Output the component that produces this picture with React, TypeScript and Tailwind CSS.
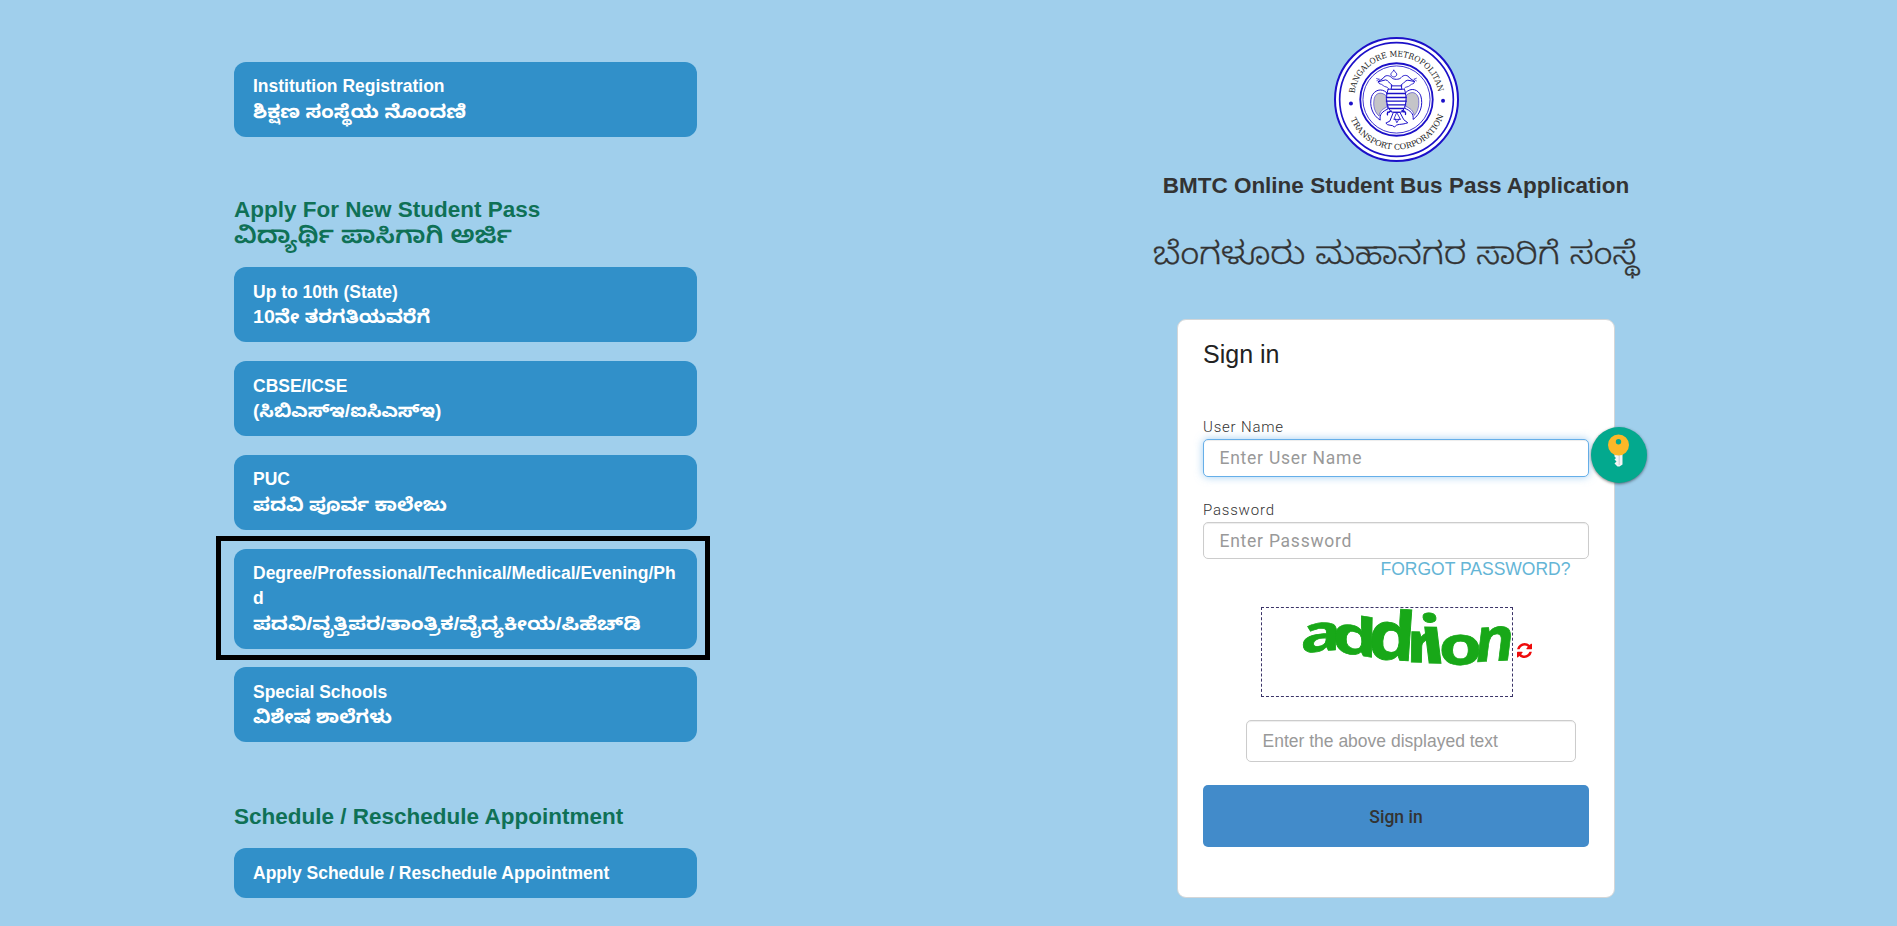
import React from "react";

const kannada = "font-['Liberation_Sans','Noto_Sans_Kannada','Noto_Sans',sans-serif]";

function Local({ text, width, size, weight }: { text: string; width: number; size: number; weight: number }) {
  const ref = React.useRef<HTMLSpanElement>(null);
  const [scale, setScale] = React.useState(1);
  React.useLayoutEffect(() => {
    if (ref.current) setScale(width / ref.current.offsetWidth);
  }, [width]);
  return (
    <span
      ref={ref}
      className={`inline-block origin-left whitespace-nowrap ${kannada}`}
      style={{ fontSize: size, fontWeight: weight, transform: `scaleX(${scale})` }}
    >
      {text}
    </span>
  );
}

type PassLinkProps = { title: string; local?: string; width?: number; low?: boolean };

function PassLink({ title, local, width, low }: PassLinkProps) {
  const pad = low ? "pt-[12.5px] pb-[12.5px]" : "pt-[11.5px] pb-[13.5px]";
  return (
    <a className={`block w-[463px] rounded-[12px] bg-[#3190c9] pl-[19px] pr-[19.5px] text-[17.5px] font-bold leading-[25px] text-white ${pad}`}>
      <span className="block break-all">{title}</span>
      {local && (
        <span className={`block h-[25px] ${low ? "-mt-px" : ""}`}>
          <Local text={local} width={width ?? 200} size={18.5} weight={700} />
        </span>
      )}
      {local && low && <span className="block h-px" />}
    </a>
  );
}

const BLUE = "#1c10c8";

function Emblem() {
  return (
    <svg className="h-[125px] w-[125px]" viewBox="42 36 376 376" fill="none" stroke={BLUE}>
      <circle cx="230" cy="224" r="185" fill="#fff" strokeWidth="6" />
      <circle cx="230" cy="224" r="171" strokeWidth="5" />
      <circle cx="230" cy="224" r="109" strokeWidth="5.500" />
      <circle cx="230" cy="224" r="101" strokeWidth="2.500" />
      <circle cx="93" cy="236" r="6" fill={BLUE} stroke="none" />
      <circle cx="370" cy="228" r="6" fill={BLUE} stroke="none" />
      <defs>
        <path id="arcTop" d="M104 206 A127 127 0 0 1 356 206" />
        <path id="arcBottom" d="M92 283 A149 149 0 0 0 373 266" />
      </defs>
      <g fill="#222" stroke="none" fontFamily="DejaVu Serif, serif" fontSize="24">
        <text textLength="362" lengthAdjust="spacingAndGlyphs"><textPath href="#arcTop">BANGALORE METROPOLITAN</textPath></text>
        <text textLength="362" lengthAdjust="spacingAndGlyphs"><textPath href="#arcBottom">TRANSPORT CORPORATION</textPath></text>
      </g>
      <g strokeWidth="3" strokeLinejoin="round" strokeLinecap="round">
        <path d="M200 203 C184 188 163 196 155 215 C147 242 158 272 181 286 C178 268 188 260 203 253 Z" fill="#fff" />
        <path d="M258 203 C274 186 296 194 303 213 C311 240 302 268 280 284 C282 266 272 258 256 251 Z" fill="#fff" />
        <path d="M197 211 C182 199 167 205 163 221 C158 244 165 264 178 274 C179 260 188 253 200 247 Z" fill="#c4c4c8" strokeWidth="1.500" />
        <path d="M261 210 C276 197 291 203 296 219 C300 242 294 261 283 272 C281 258 271 251 259 245 Z" fill="#c4c4c8" strokeWidth="1.500" />
        <path d="M205 193 H254 C262 218 260 247 245 262 H215 C199 246 196 217 205 193 Z" fill="#fff" />
        <path d="M202 206 H257 M200 218 H259 M200 229 H259 M202 240 H257 M207 251 H252" strokeWidth="4" />
        <path d="M214 192 L216 180 C209 177 205 165 197 165 L174 171 L190 160 C196 149 209 151 215 158 C220 165 239 165 244 158 C251 149 264 149 270 160 L285 170 L264 166 C256 166 251 177 244 180 L246 192 Z" fill="#fff" />
        <path d="M214 183 H246" />
        <path d="M222 136 L231 147 C231 158 216 159 213 150 C212 145 218 142 222 136 Z" fill="#fff" strokeWidth="2.500" />
        <path d="M176 172 C176 180 184 175 190 182 C196 188 202 184 205 190 M284 171 C284 179 276 175 270 182 C264 188 258 184 254 190" strokeWidth="2.500" />
        <path d="M170 161 l9 2 -8 4 M290 160 l-8 3 8 5" strokeWidth="2" />
        <path d="M215 259 C206 259 200 266 203 270 M246 258 C254 257 259 263 257 269 M209 262 L203 262 M249 261 H256" strokeWidth="4" />
        <path d="M220 264 L210 289 L198 295 C203 305 218 298 224 307 C232 295 242 302 264 294 L252 285 L241 264 Z" fill="#fff" />
        <path d="M230 264 L222 284 H241 Z M226 282 L231 294 L238 282" strokeWidth="2.500" />
      </g>
    </svg>
  );
}

const captcha = [
  { c: "a", t: "translate(38 45) rotate(-5) skewX(-8) scale(1.4 1.06)" },
  { c: "d", t: "translate(70 43) rotate(9) skewX(8) scale(1.5 1.08)" },
  { c: "d", t: "translate(105 50) rotate(4) scale(1.55 1.4)" },
  { c: "r", t: "translate(144 54) rotate(1) scale(1.42 1.16)" },
  { c: "i", t: "translate(161 55) rotate(1) skewX(8) scale(1.65 1.38)" },
  { c: "o", t: "translate(177 57) rotate(-1) scale(1.46 1.12)" },
  { c: "n", t: "translate(211 54) rotate(-3) skewX(-10) scale(1.24 1.28)" },
];

function Captcha() {
  return (
    <div className="h-[90px] w-[252px] border border-dashed border-[#3b3468]">
      <svg className="block h-[88px] w-[250px] overflow-visible" viewBox="0 0 250 88">
        <g fill="#18a818" stroke="#18a818" strokeWidth="0.6" fontFamily="Open Sans, sans-serif" fontWeight="700" fontSize="48">
          {captcha.map((l, i) => (
            <text key={i} transform={l.t}>{l.c}</text>
          ))}
        </g>
      </svg>
    </div>
  );
}

function RefreshIcon() {
  return (
    <svg className="-mt-[3px] size-[15px] text-[#ee0a0a]" viewBox="0 128 1536 1536" fill="currentColor">
      <path d="M1511 1056q0 5-1 7-64 268-268 434.500t-478 166.500q-146 0-282.500-55t-243.500-157l-129 129q-19 19-45 19t-45-19-19-45v-448q0-26 19-45t45-19h448q26 0 45 19t19 45-19 45l-137 137q71 66 161 102t187 36q134 0 250-65t186-179q11-17 53-117 8-23 30-23h192q13 0 22.500 9.500t9.500 22.500zm25-800v448q0 26-19 45t-45 19h-448q-26 0-45-19t-19-45 19-45l138-138q-148-137-349-137-134 0-250 65t-186 179q-11 17-53 117-8 23-30 23h-199q-13 0-22.500-9.500t-9.500-22.500v-7q65-268 270-434.500t480-166.500q146 0 284 55.500t245 156.500l130-129q19-19 45-19t45 19 19 45z" />
    </svg>
  );
}

function KeyBadge() {
  return (
    <div className="absolute -right-[33px] top-[107px] h-[56px] w-[56px] rounded-full bg-[#03a98e] shadow-[0_1px_3px_rgba(0,0,0,0.5)]">
      <svg className="h-[56px] w-[56px]" viewBox="0 0 56 56">
        <path d="M23.500 26 h8 v11.500 l-3 2 h-2 l-3 -3 2 -2 -2 -2 1.500 -1.500 -1.500 -1.500 Z" fill="#f4f4f4" />
        <path d="M27.500 27 h1.500 v11 h-1.500 Z" fill="#d5dadd" />
        <path fillRule="evenodd" d="M27.500 7.500 a10.500 10.500 0 0 1 0 21 a10.500 10.500 0 0 1 0 -21 Z M27.500 12 a2.700 2.700 0 0 0 0 5.400 a2.700 2.700 0 0 0 0 -5.400 Z" fill="#fcb827" />
      </svg>
    </div>
  );
}

const field =
  "block rounded-[5px] border border-[#ccc] bg-white px-[15.5px] text-[17.5px] text-[#555] shadow-[inset_0_1px_1px_rgba(0,0,0,0.075)] outline-none placeholder:text-[#999] placeholder:opacity-100";

export default function App() {
  return (
    <div className="flex h-[926px] w-full overflow-hidden bg-[#a0cfec] font-['Liberation_Sans',sans-serif]">
      <main className="ml-[234px] w-[463px] shrink-0 pt-[62px]">
        <PassLink title="Institution Registration" local="ಶಿಕ್ಷಣ ಸಂಸ್ಥೆಯ ನೊಂದಣಿ" width={213} />
        <h2 className="mt-[60px] h-[70px] text-[22.5px] font-bold leading-[25px] text-[#0f7156]">
          Apply For New Student Pass
          <span className="block h-[25px]">
            <Local text="ವಿದ್ಯಾರ್ಥಿ ಪಾಸಿಗಾಗಿ ಅರ್ಜಿ" width={278} size={24} weight={600} />
          </span>
        </h2>
        <div className="flex flex-col gap-[19px]">
          <PassLink low title="Up to 10th (State)" local="10ನೇ ತರಗತಿಯವರೆಗೆ" width={177} />
          <PassLink low title="CBSE/ICSE" local="(ಸಿಬಿಎಸ್ಇ/ಐಸಿಎಸ್ಇ)" width={188} />
          <PassLink title="PUC" local="ಪದವಿ ಪೂರ್ವ ಕಾಲೇಜು" width={194} />
          <div className="relative -mb-px">
            <PassLink
              title="Degree/Professional/Technical/Medical/Evening/Phd"
              local="ಪದವಿ/ವೃತ್ತಿಪರ/ತಾಂತ್ರಿಕ/ವೈದ್ಯಕೀಯ/ಪಿಹೆಚ್‌ಡಿ"
              width={387}
            />
            <div className="pointer-events-none absolute -left-[18px] -top-[13px] h-[124px] w-[494px] border-[5px] border-black" />
          </div>
          <PassLink low title="Special Schools" local="ವಿಶೇಷ ಶಾಲೆಗಳು" width={139} />
        </div>
        <h2 className="mt-[61px] h-[45px] pt-px text-[22.5px] font-bold leading-[25px] text-[#0f7156]">
          Schedule / Reschedule Appointment
        </h2>
        <PassLink low title="Apply Schedule / Reschedule Appointment" />
      </main>

      <section className="ml-[455px] flex w-[488px] shrink-0 flex-col items-center pt-[37px]">
        <Emblem />
        <h1 className="mt-[11px] whitespace-nowrap text-[22.5px] font-bold leading-[25px] text-[#333]">
          BMTC Online Student Bus Pass Application
        </h1>
        <div className="mt-[33px] h-[88px] w-[487px] leading-[45px] text-[#333] [-webkit-text-stroke:0.3px_#333]">
          <Local text="ಬೆಂಗಳೂರು ಮಹಾನಗರ ಸಾರಿಗೆ ಸಂಸ್ಥೆ" width={486} size={31.5} weight={300} />
        </div>

        <form className="relative h-[579px] w-[438px] shrink-0 rounded-[9px] border border-[#d3d6d8] bg-white pl-[25px] pr-[25px] pt-[17px]">
          <h3 className="text-[25px] leading-[34px] text-[#222]">Sign in</h3>
          <label className="mt-[45px] block font-['Roboto',sans-serif] text-[15px] font-light leading-[23px] tracking-[0.8px] text-[#333]">
            User Name
          </label>
          <input
            className={`${field} h-[38px] w-[386px] border-[#66afe9]! font-['Roboto',sans-serif] tracking-[0.75px] shadow-[inset_0_1px_1px_rgba(0,0,0,0.075),0_0_8px_rgba(102,175,233,0.6)]!`}
            placeholder="Enter User Name"
          />
          <label className="mt-[22px] block font-['Roboto',sans-serif] text-[15px] font-light leading-[23px] tracking-[0.8px] text-[#333]">
            Password
          </label>
          <input
            className={`${field} h-[37px] w-[386px] font-['Roboto',sans-serif] tracking-[0.75px]`}
            placeholder="Enter Password"
          />
          <a className="mr-[18.5px] block text-right text-[17.5px] leading-[20px] text-[#64b5d6]">FORGOT PASSWORD?</a>
          <div className="ml-[58px] mt-[28px] flex items-center gap-[4px]">
            <Captcha />
            <RefreshIcon />
          </div>
          <input className={`${field} ml-[43px] mt-[23px] h-[42px] w-[330px]`} placeholder="Enter the above displayed text" />
          <button
            type="button"
            className="mt-[23px] block h-[62px] w-[386px] rounded-[5px] bg-[#428bca] pt-[2px] font-['Roboto',sans-serif] text-[17.5px] font-medium text-[#333]"
          >
            Sign in
          </button>
          <KeyBadge />
        </form>
      </section>
    </div>
  );
}
